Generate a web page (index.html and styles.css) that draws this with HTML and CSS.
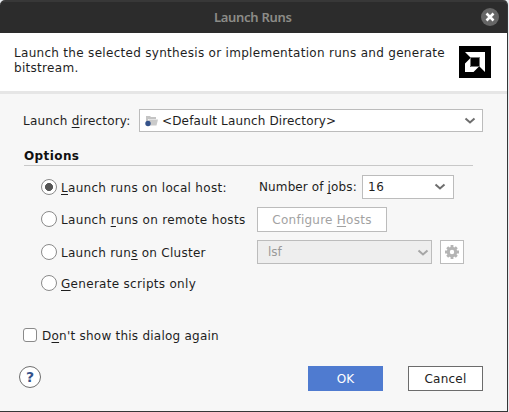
FILE: index.html
```html
<!DOCTYPE html>
<html lang="en">
<head>
<meta charset="utf-8">
<title>Launch Runs</title>
<link rel="stylesheet" href="styles.css">
</head>
<body>
<div class="dialog">
  <div class="titlebar">
    <span class="title">Launch Runs</span>
    <svg class="close" width="18" height="18" viewBox="0 0 18 18"><circle cx="9" cy="9" r="9" fill="#666"/><path d="M5.500 5.500l7 7M12.500 5.500l-7 7" stroke="#fff" stroke-width="2.600"/></svg>
  </div>
  <div class="header">
    <p class="intro">Launch the selected synthesis or implementation runs and generate<br>bitstream.</p>
    <svg class="logo" width="32" height="32" viewBox="0 0 32 32"><path d="M0 0h32v32H0z"/><path d="M6 6h20v20l-5.500-5.500V11.500H11.500zM11 12.500V21h8.500l-5 5H6v-8.500z" fill="#fff"/><path d="M11.500 11.500h9v9h-9z" stroke="#777" stroke-width="1"/></svg>
  </div>
  <div class="content">
    <div class="directory">
      <label class="dir-label">Launch <u>d</u>irectory:</label>
      <div class="select dir-select">
        <svg class="folder" width="14" height="12" viewBox="0 0 14 12"><path d="M1 6V1h4l1 1h5v2H3v4z" fill="#c4c4c4"/><path d="M3.500 4.500H13L11.500 10.500H3z" fill="#cacaca"/><circle cx="3" cy="8.500" r="2.700" fill="#34528a"/></svg>
        <span class="dir-value">&lt;Default Launch Directory&gt;</span>
        <svg class="chev" width="12" height="8" viewBox="0 0 12 8"><path d="M1.500 1.500L6 5.500l4.500-4" fill="none" stroke="#6e6e6e" stroke-width="2"/></svg>
      </div>
    </div>
    <h2 class="options">Options</h2>
    <div class="choices">
      <div class="choice jobs-row">
        <span class="radio checked"></span><label><u>L</u>aunch runs on local host:</label>
        <span class="jobs-label">Number of <u>j</u>obs:</span>
        <div class="select jobs-select"><span class="jobs-value">16</span>
          <svg class="chev" width="12" height="8" viewBox="0 0 12 8"><path d="M1.500 1.500L6 5.500l4.500-4" fill="none" stroke="#6e6e6e" stroke-width="2"/></svg></div>
      </div>
      <div class="choice remote-row">
        <span class="radio"></span><label>Launch <u>r</u>uns on remote hosts</label>
        <button class="configure"><span>Configure <u>H</u>osts</span></button>
      </div>
      <div class="choice cluster-row">
        <span class="radio"></span><label>Launch run<u>s</u> on Cluster</label>
        <div class="select cluster-select"><span>lsf</span>
          <svg class="chev" width="12" height="8" viewBox="0 0 12 8"><path d="M1.500 1.500L6 5.500l4.500-4" fill="none" stroke="#a6a6a6" stroke-width="2"/></svg></div>
        <button class="settings"><svg width="14" height="14" viewBox="0 0 14 14"><g stroke="#b4b4b4" stroke-width="2.800"><path d="M7 0v14M0 7h14M2.200 2.200l9.600 9.600M11.800 2.200l-9.600 9.600"/></g><circle cx="7" cy="7" r="3.700" fill="#fff" stroke="#b4b4b4" stroke-width="3"/></svg></button>
      </div>
      <div class="choice scripts-row">
        <span class="radio"></span><label><u>G</u>enerate scripts only</label>
      </div>
    </div>
    <div class="again"><span class="checkbox"></span><label>D<u>o</u>n't show this dialog again</label></div>
    <div class="footer">
      <button class="help">?</button>
      <button class="ok">OK</button>
      <button class="cancel">Cancel</button>
    </div>
  </div>
</div>
</body>
</html>
```
FILE: styles.css
```css
* { box-sizing: border-box; }
body {
  margin: 0;
  overflow: hidden;
  background: #e8ebef;
  font: 12px/15px "DejaVu Sans", sans-serif;
  color: #1e1e1e;
}
.dialog {
  width: 508px;
  height: 412px;
  background: #f7f7f7;
  border: solid #353638;
  border-width: 0 1px 1px 0;
  border-radius: 5px 5px 0 0;
  white-space: nowrap;
}
.titlebar {
  display: flex;
  align-items: center;
  height: 33px;
  padding: 0 8px 0 214px;
  background: #2c2c2c;
  border-top: 2px solid #383838;
  border-radius: 5px 4px 0 0;
}
.title { margin-top: -2px; font: 600 13px/18px "Noto Sans", sans-serif; letter-spacing: -0.3px; color: #8c8c88; }
.close { margin-left: auto; margin-top: -1px; }
.header {
  display: flex;
  justify-content: space-between;
  height: 61px;
  padding: 13px 16px 0 14px;
  background: #fff;
  border-bottom: 3px solid #e6e6e6;
}
.intro { margin: 0; letter-spacing: 0.3px; }
.content { padding: 15px 24px 0 23px; }
.directory { display: flex; align-items: center; }
.dir-label { width: 116px; padding-top: 1px; letter-spacing: 0.2px; }
.select {
  display: flex;
  align-items: center;
  height: 24px;
  background: #fff;
  border: 1px solid #bcbcbc;
}
.dir-select { width: 344px; height: 23px; padding: 0 6px 0 5px; }
.folder { margin-right: 3px; }
.dir-value { padding-top: 1px; letter-spacing: 0.15px; }
.chev { margin-left: auto; }
.options {
  width: 449px;
  height: 18px;
  margin: 16px 0 0 1px;
  border-bottom: 1px solid #c8c8c8;
  font-size: 12px;
  line-height: 17px;
  letter-spacing: 0.4px;
  color: #111;
}
.choices { padding: 9px 0 0 18px; }
.choice { display: flex; align-items: center; height: 24px; }
.choice label { width: 196px; padding-top: 2px; letter-spacing: 0.3px; }
.remote-row label { letter-spacing: 0.34px; }
.cluster-row label { letter-spacing: 0.27px; }
.radio {
  flex: none;
  width: 16px;
  height: 16px;
  margin-right: 4px;
  border: 1px solid #8a8a8a;
  border-radius: 50%;
  background: #fff;
}
.checked { background: radial-gradient(circle, #555 3.700px, #fff 4.300px); }
.jobs-label { width: 105px; padding-left: 2px; letter-spacing: 0.12px; }
.jobs-select { width: 92px; padding: 0 7px 0 5px; }
.jobs-value { letter-spacing: 0.6px; }
.remote-row { height: 25px; margin-top: 8px; }
.remote-row .radio { margin-top: -1px; }
.cluster-row { margin-top: 8px; }
.scripts-row { height: 22px; margin-top: 8px; }
button {
  padding: 0;
  border: 1px solid #bcbcbc;
  border-radius: 0;
  background: #fff;
  font: inherit;
  color: #a2a2a2;
}
button.configure { width: 130px; height: 25px; padding-top: 1px; letter-spacing: 0.25px; }
.cluster-select { width: 175px; padding: 1px 2px 0 10px; background: #eee; color: #999; }
.settings { display: flex; align-items: center; justify-content: center; width: 24px; height: 24px; margin-left: 8px; }
.again { display: flex; align-items: center; height: 15px; margin-top: 33px; }
.again label { padding-top: 3px; letter-spacing: 0.24px; }
.checkbox {
  width: 14px;
  height: 14px;
  margin-right: 5px;
  border: 1px solid #8a8a8a;
  border-radius: 3px;
  background: #fff;
}
.footer { display: flex; height: 25px; margin-top: 24px; }
.help {
  width: 22px;
  height: 22px;
  margin-left: -4px;
  border: 1px solid #6e6e6e;
  border-radius: 50%;
  font: bold 14px/20px "DejaVu Sans", sans-serif;
  color: #34528a;
}
.ok { width: 75px; padding-top: 1px; margin-left: 267px; border: 0; background: #4f7bd0; color: #fff; }
.cancel { width: 75px; padding-top: 1px; margin-left: 25px; border-color: #6c6c6c; color: #222; letter-spacing: 0.25px; }
u { text-decoration-thickness: 1px; text-underline-offset: 2px; text-decoration-skip-ink: none; }
```
